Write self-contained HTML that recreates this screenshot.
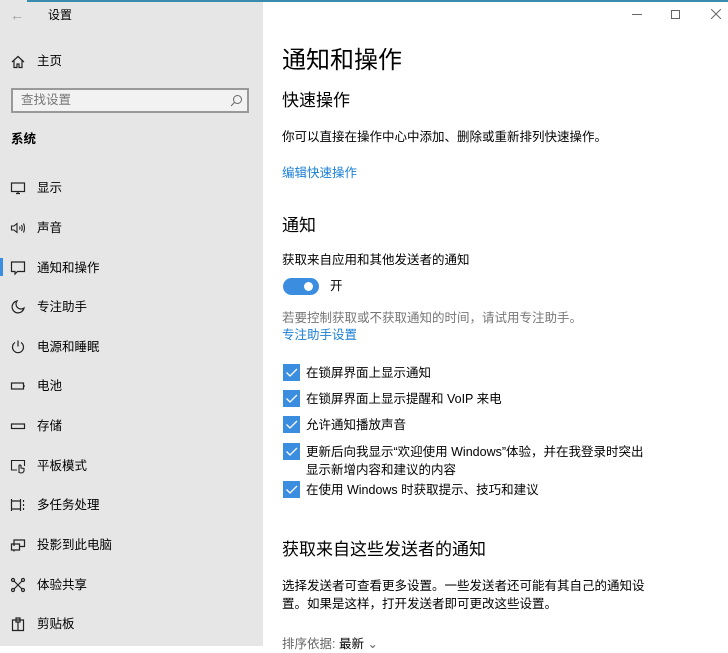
<!DOCTYPE html>
<html><head><meta charset="utf-8"><style>
*{margin:0;padding:0;box-sizing:border-box}
body{width:728px;height:646px;overflow:hidden;background:#fff;position:relative;font-family:"Liberation Sans","Noto Sans CJK SC",sans-serif;color:#000}
.a{position:absolute;white-space:nowrap}
#side{position:absolute;left:0;top:0;width:263px;height:646px;background:#e6e6e6}
.t13{font-size:12.5px;line-height:18px}
.nav{font-size:12.5px;line-height:18px;left:37px}
.ic{position:absolute;left:10px;width:16px;height:16px}
.blue{color:#1a7fd6}
.cb{position:absolute;left:283px;width:17px;height:17px;background:#3b8de0}
.cb svg{position:absolute;left:0;top:0}
</style></head><body>
<div id="side"></div>
<div class="a" style="left:27px;top:0;width:701px;height:2px;background:#3a8bb0"></div>
<div class="a" style="left:10px;top:7px;font-size:14px;color:#999">&#8592;</div>
<div class="a" style="left:48px;top:7px;font-size:12px;line-height:16px">设置</div>

<svg class="ic" style="top:54px" viewBox="0 0 16 16" fill="none" stroke="#222" stroke-width="1.2"><path d="M2 8L8 2.5 14 8M4 6.5V13.5H7V10H9V13.5H12V6.5"/></svg>
<div class="a nav" style="top:52px">主页</div>

<div class="a" style="left:11px;top:88px;width:238px;height:25px;border:2px solid #999;background:#f2f2f2"></div>
<div class="a t13" style="left:21px;top:91px;color:#777">查找设置</div>
<svg class="a" style="left:230px;top:94px" width="13" height="13" viewBox="0 0 13 13" fill="none" stroke="#666"><circle cx="7.5" cy="5.5" r="4"/><path d="M4.5 8.5L1 12"/></svg>

<div class="a t13" style="left:11px;top:130px;font-weight:bold">系统</div>

<div class="a" style="left:0;top:258px;width:3px;height:18px;background:#3b8de0"></div>

<svg class="ic" style="top:180px" viewBox="0 0 16 16" fill="none" stroke="#222" stroke-width="1.2"><rect x="1.5" y="3" width="13" height="8.5"/><path d="M8 11.5V13.5M6 13.5H10"/></svg>
<div class="a nav" style="top:179px">显示</div>
<svg class="ic" style="top:220px" viewBox="0 0 16 16" fill="none" stroke="#222" stroke-width="1.1"><path d="M1.5 6H4L7 3.5V12.5L4 10H1.5Z M9.5 6.5Q10.5 8 9.5 9.5 M11.5 5Q13 8 11.5 11 M13.5 3.5Q15.5 8 13.5 12.5"/></svg>
<div class="a nav" style="top:219px">声音</div>
<svg class="ic" style="top:260px" viewBox="0 0 16 16" fill="none" stroke="#222" stroke-width="1.2"><path d="M1.5 2H14.5V11.5H7.5L5 14V11.5H1.5Z"/></svg>
<div class="a nav" style="top:259px">通知和操作</div>
<svg class="ic" style="top:299px" viewBox="0 0 16 16" fill="none" stroke="#222" stroke-width="1.2"><path d="M7 2A6 6 0 1 0 14 9 5 5 0 0 1 7 2Z"/></svg>
<div class="a nav" style="top:298px">专注助手</div>
<svg class="ic" style="top:339px" viewBox="0 0 16 16" fill="none" stroke="#222" stroke-width="1.2"><path d="M8 1.5V7.5M5 3.5A5.5 5.5 0 1 0 11 3.5"/></svg>
<div class="a nav" style="top:338px">电源和睡眠</div>
<svg class="ic" style="top:378px" viewBox="0 0 16 16" fill="none" stroke="#222" stroke-width="1.2"><rect x="1.5" y="5" width="12" height="6"/><path d="M14 7V9"/></svg>
<div class="a nav" style="top:377px">电池</div>
<svg class="ic" style="top:418px" viewBox="0 0 16 16" fill="none" stroke="#222" stroke-width="1.2"><rect x="1.5" y="6" width="13" height="4.5"/></svg>
<div class="a nav" style="top:417px">存储</div>
<svg class="ic" style="top:458px" viewBox="0 0 16 16" fill="none" stroke="#222" stroke-width="1.1"><path d="M7 12H1.5V2.5H14.5V8M9 14.5V7.5Q10 6.5 11 7.5V10L14 10.5V13Q13 15 11 15Z"/></svg>
<div class="a nav" style="top:457px">平板模式</div>
<svg class="ic" style="top:497px" viewBox="0 0 16 16" fill="none" stroke="#222" stroke-width="1.2"><path d="M1.5 2V14M1.5 4H10.5M1.5 12H10.5M10.5 2V14M13.5 3V5M13.5 7V9M13.5 11V13"/></svg>
<div class="a nav" style="top:496px">多任务处理</div>
<svg class="ic" style="top:537px" viewBox="0 0 16 16" fill="none" stroke="#222" stroke-width="1.2"><path d="M4 9V3H14.5V9.5H10M1.5 7H9.5V13H1.5ZM4 13V14.5"/></svg>
<div class="a nav" style="top:536px">投影到此电脑</div>
<svg class="ic" style="top:577px" viewBox="0 0 16 16" fill="none" stroke="#222" stroke-width="1.2"><circle cx="3" cy="3" r="1.5"/><circle cx="13" cy="3" r="1.5"/><circle cx="3" cy="13" r="1.5"/><circle cx="13" cy="13" r="1.5"/><path d="M4 4L12 12M12 4L4 12"/></svg>
<div class="a nav" style="top:576px">体验共享</div>
<svg class="ic" style="top:616px" viewBox="0 0 16 16" fill="none" stroke="#222" stroke-width="1.2"><path d="M2.5 4H13.5V14.5H2.5ZM6 2H10V6H6ZM8 6V14.5"/></svg>
<div class="a nav" style="top:615px">剪贴板</div>

<div class="a" style="left:632px;top:14px;width:10px;height:1px;background:#666"></div>
<div class="a" style="left:671px;top:10px;width:9px;height:9px;border:1px solid #666"></div>
<svg class="a" style="left:711px;top:9px" width="10" height="10" viewBox="0 0 10 10" stroke="#666"><path d="M0 0L10 10M10 0L0 10"/></svg>

<div class="a" style="left:282px;top:46px;font-size:24px;line-height:30px">通知和操作</div>
<div class="a" style="left:282px;top:90px;font-size:17px;line-height:22px">快速操作</div>
<div class="a t13" style="left:282px;top:128px">你可以直接在操作中心中添加、删除或重新排列快速操作。</div>
<div class="a t13 blue" style="left:282px;top:164px">编辑快速操作</div>
<div class="a" style="left:282px;top:215px;font-size:17px;line-height:22px">通知</div>
<div class="a t13" style="left:282px;top:251px">获取来自应用和其他发送者的通知</div>
<div class="a" style="left:283px;top:278px;width:36px;height:17px;border-radius:9px;background:#3b8de0"></div>
<div class="a" style="left:304px;top:282px;width:9px;height:9px;border-radius:50%;background:#fff"></div>
<div class="a t13" style="left:330px;top:277px">开</div>
<div class="a t13" style="left:282px;top:309px;color:#777">若要控制获取或不获取通知的时间，请试用专注助手。</div>
<div class="a t13 blue" style="left:282px;top:326px">专注助手设置</div>

<div class="cb" style="top:364px"><svg width="17" height="17" viewBox="0 0 17 17" fill="none" stroke="#fff" stroke-width="1.3"><path d="M3.5 8.5L7 12L14 5"/></svg></div>
<div class="a t13" style="left:306px;top:364px">在锁屏界面上显示通知</div>
<div class="cb" style="top:390px"><svg width="17" height="17" viewBox="0 0 17 17" fill="none" stroke="#fff" stroke-width="1.3"><path d="M3.5 8.5L7 12L14 5"/></svg></div>
<div class="a t13" style="left:306px;top:390px">在锁屏界面上显示提醒和 VoIP 来电</div>
<div class="cb" style="top:416px"><svg width="17" height="17" viewBox="0 0 17 17" fill="none" stroke="#fff" stroke-width="1.3"><path d="M3.5 8.5L7 12L14 5"/></svg></div>
<div class="a t13" style="left:306px;top:416px">允许通知播放声音</div>
<div class="cb" style="top:443px"><svg width="17" height="17" viewBox="0 0 17 17" fill="none" stroke="#fff" stroke-width="1.3"><path d="M3.5 8.5L7 12L14 5"/></svg></div>
<div class="a t13" style="left:306px;top:443px">更新后向我显示“欢迎使用 Windows”体验，并在我登录时突出<br>显示新增内容和建议的内容</div>
<div class="cb" style="top:481px"><svg width="17" height="17" viewBox="0 0 17 17" fill="none" stroke="#fff" stroke-width="1.3"><path d="M3.5 8.5L7 12L14 5"/></svg></div>
<div class="a t13" style="left:306px;top:481px">在使用 Windows 时获取提示、技巧和建议</div>

<div class="a" style="left:282px;top:539px;font-size:17px;line-height:22px">获取来自这些发送者的通知</div>
<div class="a t13" style="left:282px;top:577px">选择发送者可查看更多设置。一些发送者还可能有其自己的通知设</div>
<div class="a t13" style="left:282px;top:595px">置。如果是这样，打开发送者即可更改这些设置。</div>
<div class="a t13" style="left:282px;top:635px;color:#666">排序依据: <span style="color:#000">最新</span> &#8964;</div>
</body></html>
